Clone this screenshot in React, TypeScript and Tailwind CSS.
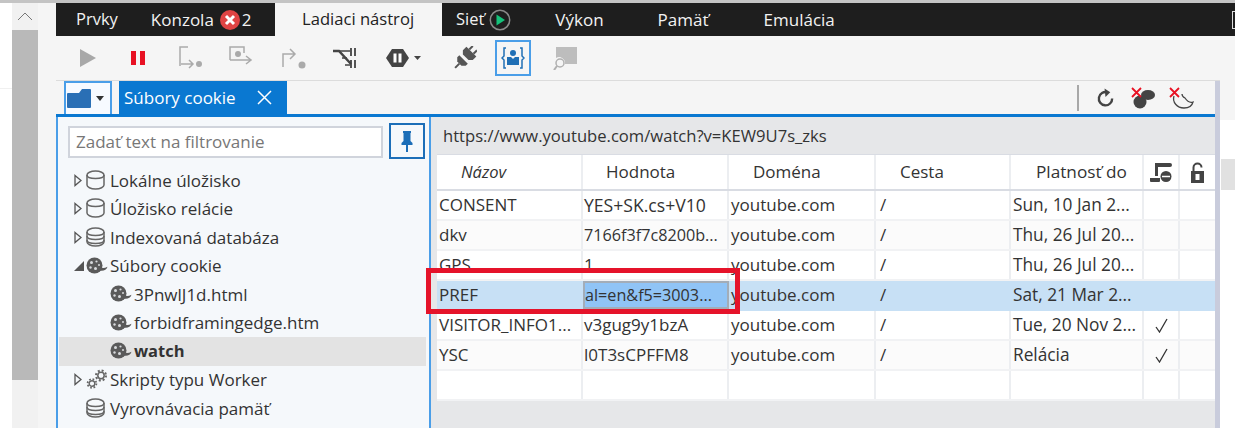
import React from "react";

const Cylinder = ({ filled = false }: { filled?: boolean }) => (
  <svg width="19" height="20" viewBox="0 0 19 20" fill="none" stroke="#666" strokeWidth="1.500" className="shrink-0 -mt-[1px]">
    <path d="M1 5c0-2 3.600-4 8.500-4S18 3 18 5v10c0 2-3.600 4-8.500 4S1 17 1 15z" />
    <path d="M1 5c0 2 3.600 3.500 8.500 3.500S18 7 18 5" />
    {filled && <path d="M1 9c0 2 3.600 3.500 8.500 3.500S18 11 18 9M1 13c0 2 3.600 3.500 8.500 3.500S18 15 18 13" />}
  </svg>
);
const Cookie = () => (
  <svg width="22" height="18" viewBox="0 0 22 18" className="shrink-0">
    <circle cx="8.500" cy="8.500" r="8" fill="#5a5a5a" />
    <path d="M13 9.500c2.500 2 5.500 1.800 8.500.2-.8 3.300-5 5-8.500 3.500z" fill="#5a5a5a" />
    <circle cx="5.500" cy="5.500" r="1.500" fill="#d8dadd" />
    <circle cx="10.500" cy="4.500" r="1.100" fill="#d8dadd" />
    <circle cx="4.500" cy="10.500" r="1.200" fill="#d8dadd" />
    <circle cx="9.500" cy="11.500" r="1.500" fill="#d8dadd" />
    <circle cx="13" cy="8" r="1" fill="#d8dadd" />
  </svg>
);
const Closed = () => (
  <svg width="8" height="13" viewBox="0 0 8 13" className="shrink-0"><path d="M1 1.500 7 6.500 1 11.500z" fill="#f5f8fb" stroke="#555" strokeWidth="1.300" /></svg>
);
const Open = () => (
  <svg width="10" height="10" viewBox="0 0 10 10" className="shrink-0"><path d="M10 0v10H0z" fill="#555" /></svg>
);
const Gears = () => (
  <svg width="22" height="21" viewBox="0 0 22 21" fill="none" stroke="#666" className="shrink-0">
    <circle cx="6" cy="14.500" r="2.800" strokeWidth="1.400" />
    <circle cx="6" cy="14.500" r="4.400" strokeWidth="1.800" strokeDasharray="1.700 1.760" />
    <circle cx="15" cy="6.500" r="3.200" strokeWidth="1.500" />
    <circle cx="15" cy="6.500" r="5" strokeWidth="2" strokeDasharray="2 1.930" />
  </svg>
);
const Check = () => (
  <svg width="13" height="15" viewBox="0 0 13 15" fill="none" stroke="#333" strokeWidth="1.300"><path d="M1 9l3.500 5L12 1" /></svg>
);

type Row = { name: string; value: string; exp: string; check?: boolean; selected?: boolean; blank?: boolean; valueSize: string };
const rows: Row[] = [
  { name: "CONSENT", value: "YES+SK.cs+V10", exp: "Sun, 10 Jan 2...", valueSize: "text-[17.6px]" },
  { name: "dkv", value: "7166f3f7c8200b...", exp: "Thu, 26 Jul 20...", valueSize: "text-[16.2px]" },
  { name: "GPS", value: "1", exp: "Thu, 26 Jul 20...", valueSize: "text-[17px]" },
  { name: "PREF", value: "al=en&f5=3003...", exp: "Sat, 21 Mar 2...", selected: true, valueSize: "text-[16.2px]" },
  { name: "VISITOR_INFO1...", value: "v3gug9y1bzA", exp: "Tue, 20 Nov 2...", check: true, valueSize: "text-[17px]" },
  { name: "YSC", value: "l0T3sCPFFM8", exp: "Relácia", check: true, valueSize: "text-[17px]" },
  { name: "", value: "", exp: "", blank: true, valueSize: "text-[17px]" },
];

const cols = "grid grid-cols-[146px_146px_147px_135px_133px_36px_35px]";

const TreeRow = ({ children, indent = 0, active = false }: { children: React.ReactNode; indent?: number; active?: boolean }) => (
  <div className={`h-[28.5px] flex items-center text-[17px] text-[#333] whitespace-nowrap ${active ? "bg-[#e3e3e3] ml-px mr-[3px]" : ""}`} style={{ paddingLeft: active ? indent - 1 : indent }}>
    {children}
  </div>
);
const Arrow = ({ children }: { children?: React.ReactNode }) => <span className="w-[11px] shrink-0 flex">{children}</span>;
const Slot = ({ children }: { children: React.ReactNode }) => <span className="w-[25px] pl-[1px] shrink-0 flex items-center">{children}</span>;

export default function App() {
  return (
    <div className="relative w-[1235px] h-[428px] overflow-hidden bg-white flex" style={{ fontFamily: '"Open Sans", "Noto Sans", sans-serif' }}>
      {/* left page scrollbar */}
      <div className="w-[56px] shrink-0 flex border-t-[3px] border-[#c4c4c4]">
        <div className="w-[12px] bg-white"><div className="mt-[85px] h-px bg-[#f0f0f0]" /></div>
        <div className="w-[26px] flex flex-col">
          <div className="h-[27px] bg-[#f1f1f1] flex items-center justify-center">
            <svg width="16" height="9" viewBox="0 0 16 9" fill="none" stroke="#777" strokeWidth="1"><path d="M1 8 8 1l7 7" /></svg>
          </div>
          <div className="h-[350px] bg-[#b9b9b9]" />
          <div className="flex-1 bg-[#f1f1f1]" />
        </div>
        <div className="w-[18px] bg-[#f5f5f5]" />
      </div>

      {/* devtools */}
      <div className="w-[1164px] shrink-0 flex flex-col bg-[#f5f5f5] border-t-[3px] border-[#c4c4c4]">
        {/* tabs */}
        <div className="h-[33px] flex bg-[#1e1e1e] text-[#f2f2f2] text-[17px] whitespace-nowrap">
          <div className="w-[219px] flex items-center pl-[20px]">
            <span className="text-[16.5px]">Prvky</span>
            <span className="ml-[33px]">Konzola</span>
            <svg width="20" height="20" viewBox="0 0 20 20" className="ml-[6px]"><circle cx="10" cy="10" r="10" fill="#e04343" /><path d="M6 6l8 8M14 6l-8 8" stroke="#fff" strokeWidth="3" /></svg>
            <span className="ml-[2px]">2</span>
          </div>
          <div className="w-[167px] bg-[#f5f5f5] text-[#222] text-[16.6px] flex items-center pl-[27px]">Ladiaci nástroj</div>
          <div className="flex-1 flex items-center pl-[14px]">
            <span className="text-[16.5px]">Sieť</span>
            <svg width="22" height="22" viewBox="0 0 22 22" className="ml-[5px]"><circle cx="11" cy="11" r="9.700" fill="none" stroke="#8a8a8a" strokeWidth="1.500" /><path d="M7.500 5.500 16 11l-8.500 5.500z" fill="#14c27a" /></svg>
            <span className="ml-[44px]">Výkon</span>
            <span className="ml-[54px]">Pamäť</span>
            <span className="ml-[55px]">Emulácia</span>
          </div>
        </div>

        {/* debugger toolbar */}
        <div className="h-[45px] flex items-center border-b border-[#dcdcdc] bg-[#f5f5f5]">
          <svg width="16" height="18" viewBox="0 0 16 18" className="ml-[24px]"><path d="M0 0l16 9-16 9z" fill="#a8a8a8" /></svg>
          <svg width="14" height="14" viewBox="0 0 14 14" className="ml-[35px]"><path d="M0 0h5v14H0zM9 0h5v14H9z" fill="#e81123" /></svg>
          <svg width="26" height="24" viewBox="0 0 26 24" fill="none" stroke="#aaa" strokeWidth="1.500" className="ml-[33px]"><path d="M10 1H2v19M3 18h11M11 14l4 4-4 4" /><circle cx="21" cy="18" r="3" fill="#aaa" stroke="none" /></svg>
          <svg width="26" height="24" viewBox="0 0 26 24" fill="none" stroke="#aaa" strokeWidth="1.500" className="ml-[25px]"><path d="M1 14V1h14v6M1 14h20M17 10l5 4-5 4" /><circle cx="9" cy="8" r="3" fill="#aaa" stroke="none" /></svg>
          <svg width="26" height="24" viewBox="0 0 26 24" fill="none" stroke="#aaa" strokeWidth="1.500" className="ml-[26px]"><path d="M2 21V8h12M9 3l5 5-5 5" /><circle cx="21" cy="19" r="3.500" fill="#aaa" stroke="none" /></svg>
          <svg width="24" height="24" viewBox="0 0 24 24" fill="none" stroke="#444" className="ml-[26px]"><path d="M0 5h6l12 13" strokeWidth="2.500" /><path d="M6 5h11M9 12h5M12 19h5" strokeWidth="1.300" /><path d="M18 2v8M22 2v8M18 14v8M22 14v8" strokeWidth="1.800" /></svg>
          <svg width="36" height="24" viewBox="0 0 36 24" className="ml-[28px]"><path d="M7 3h11l6 9-6 9H7l-6-9z" fill="#444" /><path d="M8.500 7.500h3v9h-3zM13.500 7.500h3v9h-3z" fill="#fff" /><path d="M29 10h7l-3.500 4z" fill="#444" /></svg>
          <svg width="24" height="24" viewBox="0 0 24 24" className="ml-[32px]">
            <g transform="rotate(45 12 12)" fill="#555">
              <rect x="8" y="-2" width="2" height="5" /><rect x="14" y="-2" width="2" height="5" />
              <path d="M5 3h14v5l-3 3H8L5 8z" />
              <path d="M6 14h12v3l-3 3h-6l-3-3z" /><rect x="11" y="20" width="2" height="6" />
            </g>
          </svg>
          <div className="ml-[18px] w-[36px] h-[36px] border-2 border-[#4a9ee8] flex items-center justify-center">
            <svg width="24" height="24" viewBox="0 0 24 24" fill="none"><path d="M5 2H3v8l-2 2 2 2v8h2M19 2h2v8l2 2-2 2v8h-2" stroke="#1f6fb5" strokeWidth="1.500" /><circle cx="12" cy="7" r="3" fill="#1f6fb5" /><path d="M6 11h4l2 2 2-2h4v8H6z" fill="#1f6fb5" /></svg>
          </div>
          <svg width="24" height="24" viewBox="0 0 24 24" className="ml-[22px]"><path d="M3 1h21v17H12a6 6 0 0 0-9-6z" fill="#bdbdbd" /><circle cx="7" cy="17" r="4" fill="none" stroke="#b0b0b0" strokeWidth="1.500" /><path d="M4 20l-3 4" stroke="#b0b0b0" strokeWidth="2" /></svg>
        </div>

        {/* docked panel */}
        <div className="flex-1 min-h-0 flex flex-col border-r-[5px] border-[#c9ccdc]">
          {/* document tab strip */}
          <div className="h-[36px] flex items-stretch border-b-[3px] border-[#0a78d1] bg-[#f5f5f5]">
            <div className="ml-[8px] w-[48px] bg-[#f7faff] border-2 border-b-0 border-[#4a9ee8] flex items-center pl-[1px]">
              <svg width="24" height="19" viewBox="0 0 24 19"><path d="M0 5a1 1 0 0 1 1-1h11l3-4h8a1 1 0 0 1 1 1v17a1 1 0 0 1-1 1H1a1 1 0 0 1-1-1z" fill="#2a6fb5" /></svg>
              <svg width="8" height="5" viewBox="0 0 8 5" className="ml-[5px]"><path d="M0 0h8L4 5z" fill="#333" /></svg>
            </div>
            <div className="ml-[7px] w-[168px] bg-[#0a78d1] text-white text-[17px] flex items-center pl-[5px] whitespace-nowrap">
              Súbory cookie
              <svg width="15" height="15" viewBox="0 0 15 15" className="ml-[21px]" stroke="#fff" strokeWidth="1.500"><path d="M1 1l13 13M14 1 1 14" /></svg>
            </div>
            <div className="ml-auto flex items-center pr-[21px]">
              <div className="w-[2px] h-[26px] bg-[#a8a8a8]" />
              <svg width="19" height="20" viewBox="0 0 20 20" fill="none" className="ml-[17px]"><path d="M12 4A7 7 0 1 0 17 10.500" stroke="#444" strokeWidth="2.500" /><path d="M9 0l6 4-5 5z" fill="#444" /></svg>
              <svg width="25" height="22" viewBox="0 0 25 22" className="ml-[16px]"><circle cx="9" cy="15" r="6.500" fill="#444" /><ellipse cx="17" cy="8" rx="7" ry="5" fill="#444" /><path d="M1 1l9 9M10 1l-9 9" stroke="#e81123" strokeWidth="1.800" /></svg>
              <svg width="25" height="22" viewBox="0 0 25 22" fill="none" className="ml-[13px]"><path d="M5 9c-2 6 3 12 10 12 5 0 8-2 9-6-3 1-6-1-8-4-2-1-3-3-3-4" stroke="#444" strokeWidth="1.300" /><path d="M1 1l9 9M10 1l-9 9" stroke="#e81123" strokeWidth="1.800" /></svg>
            </div>
          </div>

          {/* panes */}
          <div className="flex-1 flex min-h-0">
            {/* tree */}
            <div className="w-[375px] shrink-0 bg-[#f5f8fb] border-x-2 border-[#4a9ee8]">
              <div className="flex items-center pt-[6px] pl-[10px] gap-[6px]">
                <div className="w-[315px] h-[32px] mt-[2px] bg-white border-2 border-[#d0d4dc] flex items-center pl-[6px] text-[17px] text-[#777] whitespace-nowrap">Zadať text na filtrovanie</div>
                <div className="w-[36px] h-[36px] border-2 border-[#1c6eb8] flex items-center justify-center">
                  <svg width="12" height="21" viewBox="0 0 12 21" fill="#1c6eb8"><path d="M2 0h8v2H9.500v8l2 2v2H.500v-2l2-2V2H2zM5 14h2v7H5z" /></svg>
                </div>
              </div>
              <div className="pt-[7px]">
                <TreeRow indent={16}><Arrow><Closed /></Arrow><Slot><Cylinder /></Slot>Lokálne úložisko</TreeRow>
                <TreeRow indent={16}><Arrow><Closed /></Arrow><Slot><Cylinder /></Slot>Úložisko relácie</TreeRow>
                <TreeRow indent={16}><Arrow><Closed /></Arrow><Slot><Cylinder filled /></Slot>Indexovaná databáza</TreeRow>
                <TreeRow indent={16}><Arrow><Open /></Arrow><Slot><Cookie /></Slot>Súbory cookie</TreeRow>
                <TreeRow indent={51}><Slot><Cookie /></Slot>3PnwlJ1d.html</TreeRow>
                <TreeRow indent={51}><Slot><Cookie /></Slot>forbidframingedge.htm</TreeRow>
                <TreeRow indent={51} active><Slot><Cookie /></Slot><span className="font-bold text-[16.5px]">watch</span></TreeRow>
                <TreeRow indent={16}><Arrow><Closed /></Arrow><Slot><Gears /></Slot>Skripty typu Worker</TreeRow>
                <TreeRow indent={27}><Slot><Cylinder filled /></Slot>Vyrovnávacia pamäť</TreeRow>
              </div>
            </div>
            {/* table */}
            <div className="flex-1 min-w-0 bg-[#e6e7e9]">
              <div className="h-[37px] pt-[1px] pl-[12px] flex items-center text-[16.6px] text-[#333] whitespace-nowrap">https://www.youtube.com/watch?v=KEW9U7s_zks</div>
              <div className="pl-[6px]">
                <div className={`${cols} h-[37px] bg-white border-t border-b-2 border-[#d9dce3] text-[17px] text-[#333]`}>
                  <div className="flex items-center pl-[24px] italic text-[16.5px] border-r-2 border-[#eceef1]">Názov</div>
                  <div className="flex items-center pl-[23px] border-r-2 border-[#eceef1]">Hodnota</div>
                  <div className="flex items-center pl-[24px] border-r-2 border-[#eceef1]">Doména</div>
                  <div className="flex items-center pl-[24px] border-r-2 border-[#eceef1]">Cesta</div>
                  <div className="flex items-center pl-[25px] border-r-2 border-[#eceef1] whitespace-nowrap text-[17.2px]">Platnosť do</div>
                  <div className="flex items-center justify-center border-r-2 border-[#eceef1]">
                    <svg width="22" height="21" viewBox="0 0 22 21"><path d="M5 1h15a2 2 0 0 1 0 4H8v9H5z" fill="#444" /><path d="M0 16h10v3a1 1 0 0 1-1 1H1a1 1 0 0 1-1-1z" fill="#444" /><circle cx="16" cy="14.500" r="5.500" fill="#444" /><path d="M12 14.500h8" stroke="#fff" strokeWidth="1.500" /></svg>
                  </div>
                  <div className="flex items-center justify-center">
                    <svg width="13" height="21" viewBox="0 0 13 21"><path d="M2.500 9V5.500a4 4 0 0 1 8 0" fill="none" stroke="#444" strokeWidth="2" /><path d="M0 9h13v12H0z" fill="#444" /><path d="M4.500 12h4v6h-4z" fill="#fff" /></svg>
                  </div>
                </div>
                {rows.map((r, i) => {
                  const sep = r.selected ? "border-transparent" : "border-[#eceef1]";
                  const bg = r.selected ? "bg-[#c7e0f5] border-[#c7e0f5]" : i % 2 ? "bg-[#fbfbfb] border-[#f1f2f4]" : "bg-white border-[#f1f2f4]";
                  return (
                    <div key={i} className={`${cols} h-[30px] border-b-2 text-[17px] whitespace-nowrap text-[#333] ${bg}`}>
                      <div className={`flex items-center pl-[2px] border-r-2 overflow-hidden ${sep}`}>{r.name}</div>
                      <div className={`flex items-center overflow-hidden ${r.valueSize} ${r.selected ? "bg-[#90c4f6] border-2 border-[#a3adb8]" : `border-r-2 ${sep}`}`}>
                        <span className={r.selected ? "" : "pl-[1px]"}>{r.value}</span>
                      </div>
                      <div className={`flex items-center pl-[2px] border-r-2 ${sep}`}>{r.blank ? "" : "youtube.com"}</div>
                      <div className={`flex items-center pl-[4px] border-r-2 ${sep}`}>{r.blank ? "" : "/"}</div>
                      <div className={`flex items-center pl-[2px] border-r-2 overflow-hidden text-[17.3px] ${sep}`}>{r.exp}</div>
                      <div className={`flex items-center justify-center border-r-2 ${sep}`}>{r.check ? <Check /> : null}</div>
                      <div />
                    </div>
                  );
                })}
              </div>
            </div>
          </div>
        </div>
      </div>

      {/* right strip */}
      <div className="flex-1 flex flex-col border-t-[3px] border-[#c4c4c4]">
        <div className="h-[33px] bg-[#1e1e1e] flex items-center pl-[12px]"><div className="w-[3px] h-[18px] border border-r-0 border-[#ddd]" /></div>
        <div className="h-[84px] bg-[#f5f5f5]" />
        <div className="h-[39px] bg-white" />
        <div className="h-[31px] ml-px bg-[#e1e1e1]" />
        <div className="flex-1 bg-white" />
      </div>

      {/* red highlight */}
      <div className="absolute left-[426px] top-[268px] w-[314px] h-[46px] border-[5px] border-[#e5132a]" />
    </div>
  );
}
